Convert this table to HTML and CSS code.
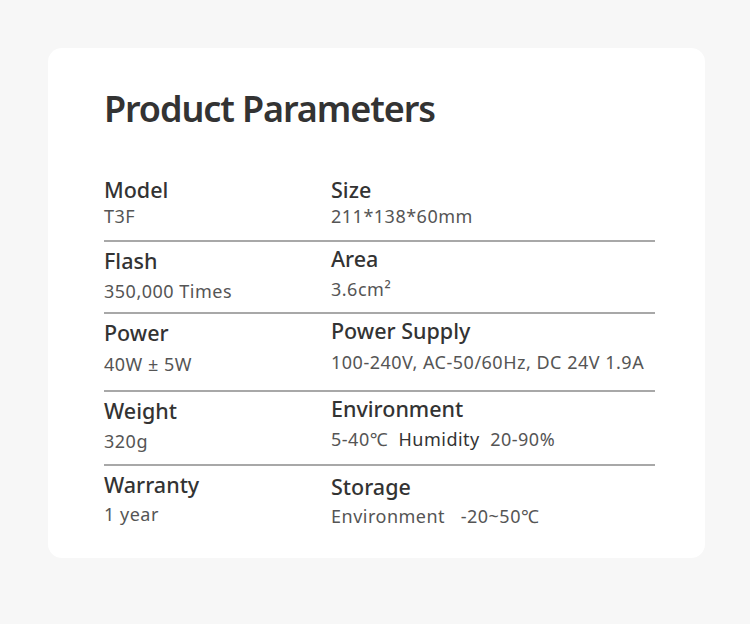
FILE: index.html
```html
<!DOCTYPE html>
<html>
<head>
<meta charset="utf-8">
<link rel="stylesheet" href="styles.css">
</head>
<body>
<div class="card">
  <h1 class="title">Product Parameters</h1>
  <div class="table">
    <div class="row r1">
      <div class="cell"><div class="label">Model</div><div class="value">T3F</div></div>
      <div class="cell"><div class="label">Size</div><div class="value">211*138*60mm</div></div>
    </div>
    <div class="row r2">
      <div class="cell"><div class="label">Flash</div><div class="value">350,000 Times</div></div>
      <div class="cell up"><div class="label">Area</div><div class="value">3.6cm²</div></div>
    </div>
    <div class="row r3">
      <div class="cell"><div class="label">Power</div><div class="value">40W ± 5W</div></div>
      <div class="cell up"><div class="label">Power Supply</div><div class="value">100-240V, AC-50/60Hz, DC 24V 1.9A</div></div>
    </div>
    <div class="row r4">
      <div class="cell"><div class="label">Weight</div><div class="value">320g</div></div>
      <div class="cell up"><div class="label">Environment</div><div class="value">5-40℃&nbsp; <span class="dark">Humidity</span>&nbsp; 20-90%</div></div>
    </div>
    <div class="row r5 last">
      <div class="cell"><div class="label">Warranty</div><div class="value">1 year</div></div>
      <div class="cell down"><div class="label">Storage</div><div class="value">Environment&nbsp;&nbsp; -20~50℃</div></div>
    </div>
  </div>
</div>
</body>
</html>
```
FILE: styles.css
```css
html, body {
  margin: 0;
  padding: 0;
  background: #f7f7f7;
}
body {
  width: 750px;
  height: 624px;
  padding-top: 48px;
  box-sizing: border-box;
  font-family: "Noto Sans", "Open Sans", sans-serif;
  color: #333;
}
.card {
  margin-left: 48px;
  width: 657px;
  height: 510px;
  background: #fff;
  border-radius: 14px;
  box-sizing: border-box;
  padding: 37px 50px 0 56px;
}
.title {
  margin: 0;
  font-size: 36px;
  font-weight: 600;
  line-height: 48px;
  color: #333;
  letter-spacing: -1.1px;
}
.table {
  margin-top: 43px;
}
.row {
  display: grid;
  grid-template-columns: 227px 1fr;
  border-bottom: 2px solid #a8a8a8;
  box-sizing: content-box;
  padding-top: 5px;
}
.row.last {
  border-bottom: none;
}
.label {
  font-size: 21.5px;
  font-weight: 500;
  line-height: 28px;
  color: #333;
}
.value {
  font-size: 18px;
  line-height: 24px;
  color: #555;
  margin-top: 4px;
  letter-spacing: 0.5px;
  white-space: nowrap;
}
.dark { color: #333; }
.r1 { height: 64px; padding-top: 0; }
.r1 .value { margin-top: 0; }
.r2 { height: 65px; }
.r3 { height: 71px; }
.r3 .value { margin-top: 5px; }
.r4 { height: 67px; }
.r5 .value { margin-top: 3px; }
.up { margin-top: -2px; }
.down { margin-top: 2px; }
```
